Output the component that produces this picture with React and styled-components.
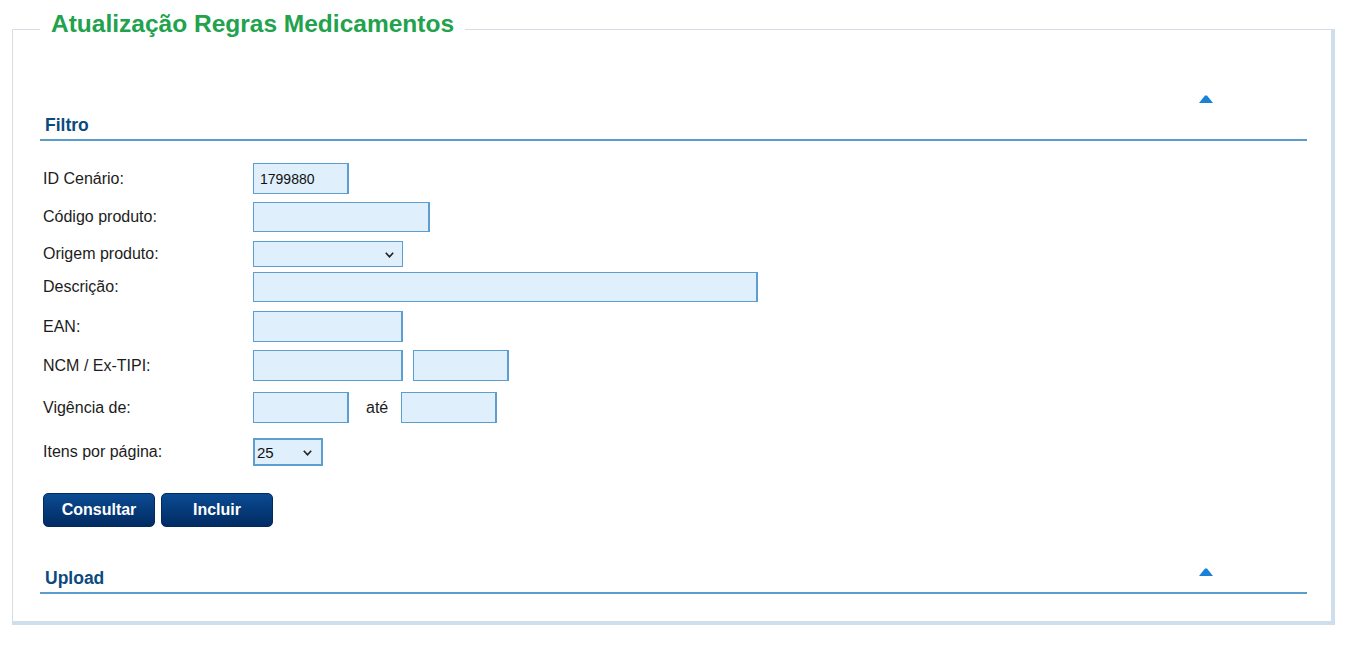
import React from 'react';
import styled, { createGlobalStyle } from 'styled-components';

const GlobalStyle = createGlobalStyle`
  body {
    margin: 0;
    background: #fff;
    font-family: "Liberation Sans", Arial, sans-serif;
  }
`;

const Page = styled.div`
  padding: 10px 0 20px 12px;
`;

const Panel = styled.fieldset`
  box-sizing: border-box;
  width: 1323px;
  margin: 0;
  padding: 0 24px 27px 27px;
  border-style: solid;
  border-width: 1px 4px 4px 1px;
  border-color: #d6dde4 #cfdeeb #cfdeeb #d6dde4;
`;

const Title = styled.legend`
  padding: 0 11px 10px;
  font-size: 24.5px;
  line-height: 28px;
  font-weight: bold;
  color: #21a24c;
`;

const ToggleBar = styled.div`
  display: flex;
  justify-content: flex-end;
  padding: 47px 94px 0 0;
  margin-bottom: 12px;
`;

const SectionHeader = styled.div`
  display: flex;
  justify-content: space-between;
  align-items: flex-start;
  margin-top: ${p => p.$top || 0}px;
  padding: 0 94px 4px 5px;
  border-bottom: 2px solid #5b9dca;
  color: #0c4a7e;
  font-size: 17.5px;
  line-height: 20px;
  font-weight: bold;
`;

const Arrow = styled.svg`
  display: block;
  width: 14px;
  height: 8px;
  margin-top: ${p => p.$top || 0}px;
  fill: #1a82d6;
`;

const Form = styled.div`
  margin-top: 22px;
`;

const Row = styled.div`
  display: flex;
  align-items: center;
  margin-bottom: ${p => p.$mb || 0}px;
`;

const Label = styled.label`
  box-sizing: border-box;
  width: 213px;
  padding-left: 3px;
  font-size: 16px;
  color: #1c1c1c;
`;

const TextInput = styled.input`
  box-sizing: border-box;
  width: ${p => p.$w}px;
  height: ${p => p.$h || 31}px;
  margin: 0 0 0 ${p => p.$ml || 0}px;
  padding: 0 6px;
  border: 1px solid #5b9ecf;
  border-right-width: 2px;
  background: #dfeffb;
  font-family: "Liberation Sans", Arial, sans-serif;
  font-size: 14px;
  color: #111;
  outline: none;
`;

const SelectBox = styled.div`
  position: relative;
  display: flex;
`;

const Select = styled.select`
  box-sizing: border-box;
  width: ${p => p.$w}px;
  height: ${p => p.$h}px;
  margin: 0;
  padding: 0 2px;
  border: ${p => (p.$thick ? 2 : 1)}px solid #5b9ecf;
  border-radius: 0;
  appearance: none;
  background: #dfeffb;
  font-family: "Liberation Sans", Arial, sans-serif;
  font-size: 15px;
  color: #111;
  outline: none;
`;

const Chevron = styled.svg`
  position: absolute;
  top: 50%;
  right: ${p => p.$right}px;
  width: 9px;
  height: 6px;
  margin-top: -2px;
  fill: none;
  stroke: #222;
  stroke-width: 1.6;
  pointer-events: none;
`;

const Between = styled.span`
  margin: 0 13px 0 17px;
  font-size: 16px;
  color: #1c1c1c;
`;

const Buttons = styled.div`
  display: flex;
  gap: 6px;
  margin-top: 27px;
  padding-left: 3px;
`;

const Button = styled.button`
  width: 112px;
  height: 34px;
  border: 1px solid #022a5c;
  border-radius: 5px;
  background: linear-gradient(#0b4b93, #012b62);
  color: #fff;
  font-family: "Liberation Sans", Arial, sans-serif;
  font-size: 16px;
  font-weight: bold;
  cursor: pointer;
`;

const UpArrow = ({ top }) => (
  <Arrow viewBox="0 0 14 8" $top={top}>
    <polygon points="6,0.4 8,0.4 14,8 0,8" />
  </Arrow>
);

const Dropdown = ({ width, height, thick, right, children, ...rest }) => (
  <SelectBox>
    <Select $w={width} $h={height} $thick={thick} {...rest}>
      {children}
    </Select>
    <Chevron viewBox="0 0 9 6" $right={right}>
      <polyline points="0.8,0.8 4.5,4.8 8.2,0.8" />
    </Chevron>
  </SelectBox>
);

const App = () => (
  <Page>
    <GlobalStyle />
    <Panel>
      <Title>Atualização Regras Medicamentos</Title>

      <ToggleBar>
        <UpArrow />
      </ToggleBar>
      <SectionHeader>
        <span>Filtro</span>
      </SectionHeader>

      <Form>
        <Row $mb={8}>
          <Label>ID Cenário:</Label>
          <TextInput $w={96} defaultValue="1799880" />
        </Row>
        <Row $mb={9}>
          <Label>Código produto:</Label>
          <TextInput $w={177} $h={30} />
        </Row>
        <Row $mb={5}>
          <Label>Origem produto:</Label>
          <Dropdown width={150} height={26} right={9}>
            <option value=""></option>
          </Dropdown>
        </Row>
        <Row $mb={9}>
          <Label>Descrição:</Label>
          <TextInput $w={505} $h={30} />
        </Row>
        <Row $mb={8}>
          <Label>EAN:</Label>
          <TextInput $w={150} />
        </Row>
        <Row $mb={11}>
          <Label>NCM / Ex-TIPI:</Label>
          <TextInput $w={150} />
          <TextInput $w={96} $ml={10} />
        </Row>
        <Row $mb={15}>
          <Label>Vigência de:</Label>
          <TextInput $w={96} />
          <Between>até</Between>
          <TextInput $w={96} />
        </Row>
        <Row>
          <Label>Itens por página:</Label>
          <Dropdown width={70} height={28} thick right={11} defaultValue="25">
            <option value="25">25</option>
            <option value="50">50</option>
            <option value="100">100</option>
          </Dropdown>
        </Row>
      </Form>

      <Buttons>
        <Button>Consultar</Button>
        <Button>Incluir</Button>
      </Buttons>

      <SectionHeader $top={41}>
        <span>Upload</span>
        <UpArrow top={0} />
      </SectionHeader>
    </Panel>
  </Page>
);

export default App;
